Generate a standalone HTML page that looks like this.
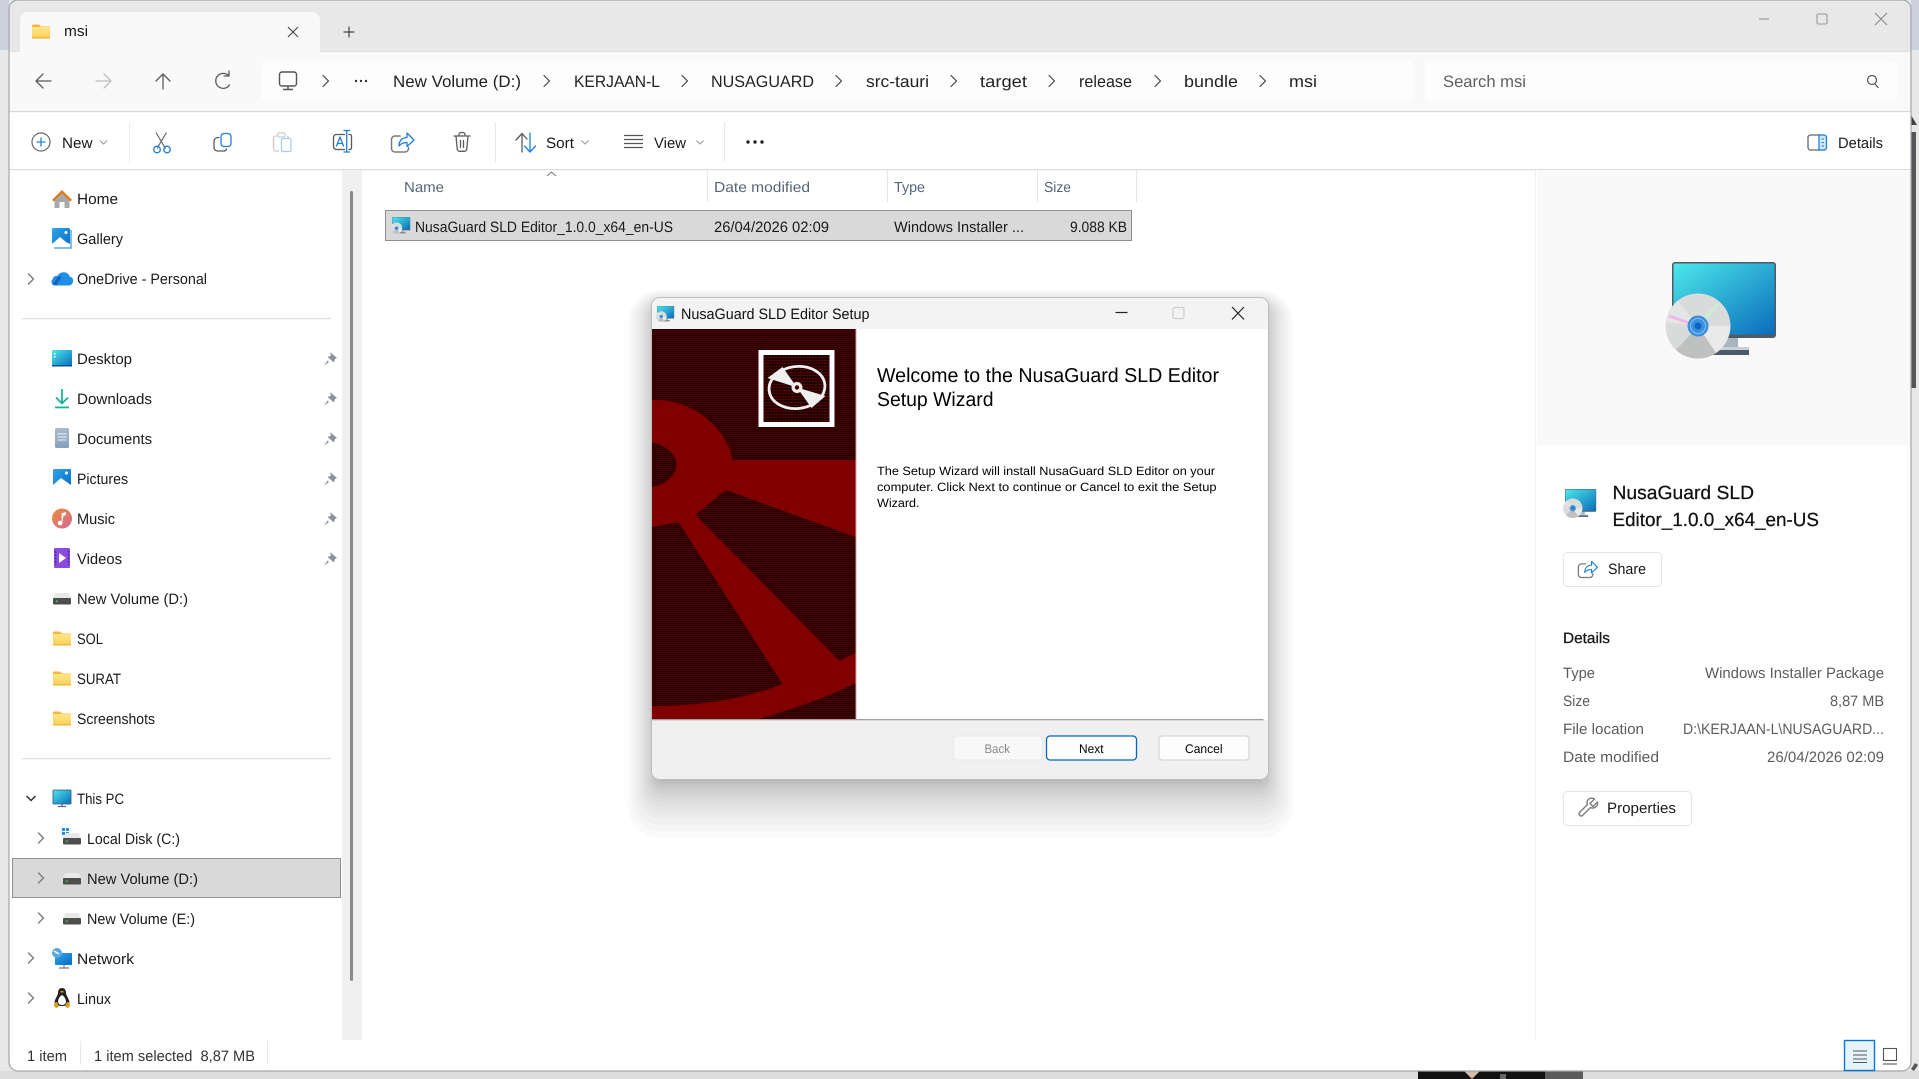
<!DOCTYPE html>
<html><head><meta charset="utf-8"><title>msi</title>
<style>
html,body{margin:0;padding:0;background:#e6e6e6;width:1919px;height:1079px;overflow:hidden}
svg{display:block;position:absolute;left:0;top:0}
text{font-family:"Liberation Sans",sans-serif;fill:#1a1a1a;font-size:15px;white-space:pre;text-rendering:geometricPrecision}
.n{font-size:16.5px;fill:#222}
.h{font-size:14.5px;fill:#56657a}
.g{fill:#5c5c5c}
.l{fill:none;stroke:#5a5a5a;stroke-width:1.3;stroke-linecap:round;stroke-linejoin:round}
.s{fill:none;stroke:#7a7a7a;stroke-width:1.5;stroke-linecap:round;stroke-linejoin:round}
.b{fill:none;stroke:#1f7fd6;stroke-width:1.3;stroke-linecap:round;stroke-linejoin:round}
</style></head>
<body>
<svg width="1919" height="1079" viewBox="0 0 1919 1079" xmlns="http://www.w3.org/2000/svg">
<defs>
<linearGradient id="scr" x1="0" y1="0" x2="1" y2="1"><stop offset="0" stop-color="#4ce8ea"/><stop offset="1" stop-color="#0a6cbc"/></linearGradient>
<linearGradient id="fld" x1="0" y1="0" x2="0" y2="1"><stop offset="0" stop-color="#ffe68a"/><stop offset="1" stop-color="#fcd25a"/></linearGradient>
<linearGradient id="mus" x1="0" y1="0" x2="1" y2="1"><stop offset="0" stop-color="#ef8a3c"/><stop offset="1" stop-color="#cf6a9a"/></linearGradient>
<linearGradient id="blu" x1="0" y1="0" x2="1" y2="1"><stop offset="0" stop-color="#2ea6ee"/><stop offset="1" stop-color="#0a6cc0"/></linearGradient>
<linearGradient id="doc" x1="0" y1="0" x2="0" y2="1"><stop offset="0" stop-color="#a8bcd0"/><stop offset="1" stop-color="#86a0ba"/></linearGradient>
<pattern id="dith" width="2" height="2" patternUnits="userSpaceOnUse"><rect width="2" height="2" fill="#0e0000"/><rect width="1" height="1" fill="#800000"/><rect x="1" y="1" width="1" height="1" fill="#3a0000"/></pattern>
<pattern id="dith2" width="3" height="3" patternUnits="userSpaceOnUse"><rect width="3" height="3" fill="#0a0000"/><rect width="1" height="3" fill="#500000"/><rect width="3" height="1" fill="#500000"/></pattern>
<clipPath id="win"><rect x="9" y="0" width="1902" height="1071" rx="9"/></clipPath>
<clipPath id="dlg"><rect x="652" y="297" width="617" height="483" rx="8"/></clipPath>
<clipPath id="art"><rect x="652" y="329" width="204" height="390"/></clipPath>

<g id="msi">
 <rect x="38" y="76" width="28" height="10" fill="#a8b4c0"/>
 <rect x="34" y="85" width="43" height="8" fill="#4e5a66"/><rect x="34" y="85" width="43" height="3" fill="#c8d0d8"/>
 <rect x="0" y="0" width="104" height="76" rx="3" fill="#4f5a66"/>
 <rect x="1.5" y="1.5" width="101" height="71" rx="2" fill="url(#scr)"/>
 <circle cx="26" cy="64" r="32.500" fill="#d9dbdb"/>
 <path d="M26 64L58 64A32 32 0 0 1 44 91Z" fill="#eaeaea"/>
 <path d="M26 64L44 91A32 32 0 0 1 4 88Z" fill="#bfc1c1"/>
 <path d="M26 64L-6 60A32 32 0 0 1 6 39Z" fill="#e4e6e6"/>
 <path d="M26 64L-3 54" stroke="#f0b8e8" stroke-width="3"/>
 <path d="M26 64L46 42" stroke="#c8f0d0" stroke-width="3"/>
 <circle cx="26" cy="64" r="10.500" fill="#3a90de"/><circle cx="26" cy="64" r="7.500" fill="none" stroke="#9cc8f0" stroke-width=".8"/><circle cx="26" cy="64" r="3.500" fill="#0a66c0"/>
</g>
<g id="share">
 <path class="s" d="M-4 -6h-5a3.500 3.500 0 0 0-3.500 3.500v9a3.500 3.500 0 0 0 3.500 3.500h10a3.500 3.500 0 0 0 3.500-3.500v-1"/>
 <path class="b" d="M-5 4c0-6 4-8.500 8-8.500v-4.500l7 7-7 6.500v-4c-3.500 0-6 1-8 3.500z"/>
</g>
<g id="pin"><path d="M-1 -7l7 6-2 1-1 3.500-6.500-5.500 3.500-1.500zM-3.500 1.500l-3.500 5 5-3.500z" fill="#8c949c"/></g>
<g id="fold"><path d="M0 2a1 1 0 0 1 1-1h6l2 2h8a1 1 0 0 1 1 1v10a1 1 0 0 1-1 1h-16a1 1 0 0 1-1-1z" fill="#f5b73a"/><rect x="0" y="3.500" width="18" height="11" rx="1" fill="url(#fld)"/><rect x="0" y="13.800" width="18" height="1.200" fill="#eeb030"/></g>
<g id="drv"><path d="M2.500 0h13l2.500 5h-18z" fill="#e8e8e8"/><rect x="0" y="5" width="18" height="6.500" rx="1" fill="#4e4e4e"/><rect x="3" y="7.500" width="1.500" height="1.500" fill="#40e060"/></g>
<path id="chev" class="s" d="M-2.500 -5L2.500 0L-2.500 5" style="stroke:#808080"/>
<path id="cn" d="M-3 -5.500L2.500 0L-3 5.500" fill="none" stroke="#444" stroke-width="1.200" stroke-linecap="round" stroke-linejoin="round"/>
<path id="dn" d="M-3.500 -1.500L0 2L3.500 -1.500" fill="none" stroke="#999" stroke-width="1.100"/>
</defs>

<!-- desktop behind -->
<rect width="1919" height="1079" fill="#e8e8e8"/>
<rect x="0" y="0" width="9" height="50" fill="#ccd3de"/><rect x="1911" y="0" width="8" height="50" fill="#ccd3de"/>
<rect x="0" y="1071" width="1919" height="8" fill="#dcdcdc"/>
<rect x="1418" y="1071" width="127" height="8" fill="#111"/><path d="M1464 1071h16l-8 8z" fill="#d8b8a8"/><rect x="1500" y="1074" width="6" height="5" fill="#666"/><rect x="1545" y="1071" width="38" height="8" fill="#5c5c5c"/>
<rect x="1911" y="132" width="5" height="256" fill="#555"/>
<path d="M1911 115l6 10h-6z" fill="#444"/>
<path d="M1911 1069l4-6 3 2-4 6z" fill="#555"/>

<!-- window -->
<g clip-path="url(#win)">
<rect x="9" y="0" width="1902" height="1071" fill="#fff"/>
<rect x="9" y="0" width="1902" height="51" fill="#e8e8e8"/>
<rect x="9" y="51" width="1902" height="60" fill="#f9f9f9"/>
<path d="M20 51V20a8 8 0 0 1 8-8h284a8 8 0 0 1 8 8v31z" fill="#f9f9f9"/>
<rect x="9" y="51" width="11" height="1" fill="#e0e0e0"/><rect x="320" y="51" width="1591" height="1" fill="#e0e0e0"/>
<rect x="9" y="111" width="1902" height="1.200" fill="#d6d6d6"/>
<rect x="9" y="169" width="1902" height="1.200" fill="#dcdcdc"/>
<rect x="342" y="170" width="20" height="870" fill="#f0f0f0"/>
<rect x="350" y="191" width="3" height="790" rx="1.500" fill="#8a8a8a"/>
<rect x="1537" y="170" width="374" height="275" fill="#f9f9f9"/>
<rect x="1535" y="170" width="1" height="870" fill="#f0f0f0"/>
</g>
<rect x="9" y="0" width="1902" height="1071" rx="9" fill="none" stroke="#a2a7ad" stroke-width="1.200"/>

<!-- tab -->
<use href="#fold" transform="translate(32 23.500)"/>
<text x="64" y="36" textLength="24" lengthAdjust="spacingAndGlyphs">msi</text>
<path d="M288 27l10 10M298 27l-10 10" stroke="#444" stroke-width="1.100" fill="none"/>
<path d="M343.500 32h11M349 26.500v11" stroke="#444" stroke-width="1.200" fill="none"/>
<path d="M1759 19h10" stroke="#999" stroke-width="1.200"/>
<rect x="1817" y="14" width="10" height="10" rx="1.500" fill="none" stroke="#999" stroke-width="1.100"/>
<path d="M1875 13l12 12M1887 13l-12 12" stroke="#888" stroke-width="1.100"/>

<!-- nav -->
<path class="l" d="M51 81H36M43 74L36 81L43 88"/>
<path class="l" style="stroke:#bdbdbd" d="M96 81H111M104 74L111 81L104 88"/>
<path class="l" d="M163 89V74M156 81L163 74L170 81"/>
<path class="l" d="M229.500 85a7.500 7.500 0 1 1-1-9.500M229 71v5h-5"/>
<rect x="261" y="61" width="1153" height="40" rx="5" fill="#fdfdfd"/>
<rect x="1425" y="61" width="473" height="40" rx="5" fill="#fdfdfd"/>
<rect x="279.500" y="72" width="17" height="14" rx="2.500" fill="none" stroke="#555" stroke-width="1.400"/><path d="M288 86v3M283 89.500h10" stroke="#555" stroke-width="1.400"/>
<use href="#cn" x="326" y="81"/>
<g fill="#333"><circle cx="356" cy="81" r="1.200"/><circle cx="361" cy="81" r="1.200"/><circle cx="366" cy="81" r="1.200"/></g>
<text class="n" x="393" y="87" textLength="128" lengthAdjust="spacingAndGlyphs">New Volume (D:)</text><use href="#cn" x="547" y="81"/>
<text class="n" x="574" y="87" textLength="86" lengthAdjust="spacingAndGlyphs">KERJAAN-L</text><use href="#cn" x="685" y="81"/>
<text class="n" x="711" y="87" textLength="103" lengthAdjust="spacingAndGlyphs">NUSAGUARD</text><use href="#cn" x="839" y="81"/>
<text class="n" x="866" y="87" textLength="63" lengthAdjust="spacingAndGlyphs">src-tauri</text><use href="#cn" x="954" y="81"/>
<text class="n" x="980" y="87" textLength="47" lengthAdjust="spacingAndGlyphs">target</text><use href="#cn" x="1052" y="81"/>
<text class="n" x="1079" y="87" textLength="53" lengthAdjust="spacingAndGlyphs">release</text><use href="#cn" x="1158" y="81"/>
<text class="n" x="1184" y="87" textLength="54" lengthAdjust="spacingAndGlyphs">bundle</text><use href="#cn" x="1263" y="81"/>
<text class="n" x="1289" y="87" textLength="28" lengthAdjust="spacingAndGlyphs">msi</text>
<text class="n" style="fill:#5f5f5f" x="1443" y="87" textLength="83" lengthAdjust="spacingAndGlyphs">Search msi</text>
<circle cx="1872" cy="80" r="4.500" fill="none" stroke="#555" stroke-width="1.200"/><path d="M1875 84l3.500 4" stroke="#555" stroke-width="1.200"/>

<!-- command bar -->
<circle cx="41" cy="142" r="9" fill="none" stroke="#666" stroke-width="1.200"/><path d="M41 137.500v9M36.500 142h9" stroke="#1f7fd6" stroke-width="1.300"/>
<text x="62" y="148" textLength="30.500" lengthAdjust="spacingAndGlyphs">New</text><use href="#dn" x="103.500" y="142"/>
<rect x="129" y="122" width="1" height="40" fill="#ececec"/>
<path d="M156 132.500l9.500 16M166.500 132.500l-9.500 16" stroke="#666" stroke-width="1.200" fill="none"/>
<circle cx="157" cy="149.500" r="3.300" class="b"/><circle cx="167" cy="149.500" r="3.300" class="b"/>
<rect x="221" y="133.500" width="10" height="13" rx="3" class="b"/><path class="l" d="M219 137.500h-1a4 4 0 0 0-4 4v6a3.500 3.500 0 0 0 3.500 3.500h6a3 3 0 0 0 3-2"/>
<path fill="none" stroke="#c8ccd0" stroke-width="1.300" d="M277 136h-1a2.500 2.500 0 0 0-2.500 2.500v10a2.500 2.500 0 0 0 2.500 2.500h3M279 133h5a1 1 0 0 1 1 1v2a1 1 0 0 1-1 1h-5a1 1 0 0 1-1-1v-2a1 1 0 0 1 1-1zM287 136a2.500 2.500 0 0 1 1.500 2"/>
<rect x="281.500" y="138.500" width="9.500" height="13" rx="1.500" fill="none" stroke="#a8cdee" stroke-width="1.300"/>
<path class="l" d="M344.500 134.500h-8a3 3 0 0 0-3 3v9a3 3 0 0 0 3 3h8M349 134.500h1a1.500 1.500 0 0 1 1.500 1.500v12a1.500 1.500 0 0 1-1.500 1.500h-1"/>
<path class="b" d="M344 130.500h5.500M346.700 130.500v21.500M344 152h5.500"/>
<path class="b" d="M336.500 146l3.500-9 3.500 9M337.500 143.500h5"/>
<use href="#share" transform="translate(404 142)"/>
<path class="l" d="M454 136h16M459 136v-1.500a2 2 0 0 1 2-2h2a2 2 0 0 1 2 2v1.500M456 136l1.200 13a2.500 2.500 0 0 0 2.500 2.300h4.600a2.500 2.500 0 0 0 2.500-2.300l1.200-13M460.500 140.500v7M463.500 140.500v7"/>
<rect x="495" y="122" width="1" height="40" fill="#e9e9e9"/>
<path class="l" d="M522 152V134M516 140l6-6.500 5 5.500"/><path class="b" d="M530 133v18.500M524.500 146l5.500 6 5.500-6"/>
<text x="546" y="148" textLength="28" lengthAdjust="spacingAndGlyphs">Sort</text><use href="#dn" x="585" y="142"/>
<path d="M624 135.500h19M624 139.500h19M624 143.500h19M624 147.500h19" stroke="#555" stroke-width="1.200"/>
<text x="654" y="148" textLength="32" lengthAdjust="spacingAndGlyphs">View</text><use href="#dn" x="700" y="142"/>
<rect x="724" y="122" width="1" height="40" fill="#e9e9e9"/>
<g fill="#222"><circle cx="748" cy="142" r="1.700"/><circle cx="755" cy="142" r="1.700"/><circle cx="762" cy="142" r="1.700"/></g>
<rect x="1808" y="135" width="18" height="15" rx="2.500" fill="none" stroke="#666" stroke-width="1.300"/><path d="M1819 135h5a2.500 2.500 0 0 1 2.500 2.500v10a2.500 2.500 0 0 1-2.500 2.500h-5z" fill="#d4e8f9" stroke="#1f7fd6" stroke-width="1.300"/><path d="M1821.500 139h2.500M1821.500 142.500h2.500M1821.500 146h2.500" stroke="#1f7fd6" stroke-width="1"/>
<text x="1838" y="148" textLength="45" lengthAdjust="spacingAndGlyphs">Details</text>

<!-- sidebar -->
<path d="M62 190l-10 10 2 1.500 8-8 8 8 2-1.500z" fill="#e07818"/><path d="M54.500 200.500L62 193.500l7.500 7V208h-5v-6h-5v6h-5z" fill="#a8a8a8"/>
<text x="77" y="204" textLength="41" lengthAdjust="spacingAndGlyphs">Home</text>
<rect x="52" y="228" width="18" height="18" rx="1.500" fill="url(#blu)"/><path d="M52 244l8-7 6 5 4 2v2H52z" fill="#fff"/><circle cx="66" cy="232.500" r="1.500" fill="#fff"/><path d="M71 230v18H54" fill="none" stroke="#5aa8e0" stroke-width="1.500"/>
<text x="77" y="244" textLength="46" lengthAdjust="spacingAndGlyphs">Gallery</text>
<use href="#chev" x="31" y="279"/>
<path d="M55 285.500a3.500 3.500 0 0 1-2.500-6c.5-3 3-4 5-3.500 1.500-3.500 6.500-5 10-2.500 1.500 1 2 2.500 2.500 3.500 2.500 0 3.500 2.500 3 4.500-.5 2.500-2 4-4 4z" fill="#1d8fe6"/><path d="M53 284l5.500-8 3 1-5 8.500z" fill="#1c5fc0"/>
<text x="77" y="284" textLength="130" lengthAdjust="spacingAndGlyphs">OneDrive - Personal</text>
<rect x="22" y="318" width="309" height="1.200" fill="#dedede"/>

<rect x="52" y="350" width="20" height="16" rx="1" fill="url(#scr)"/><rect x="52" y="365" width="20" height="1.500" fill="#0b4f8c"/><rect x="54" y="353" width="1.500" height="1.500" fill="#fff"/><rect x="54" y="356" width="1.500" height="1.500" fill="#fff"/>
<text x="77" y="364" textLength="55" lengthAdjust="spacingAndGlyphs">Desktop</text><use href="#pin" transform="translate(331 359)"/>
<path d="M62 389v14M56 397.500l6 6 6-6" fill="none" stroke="#19b394" stroke-width="1.800"/><rect x="55" y="406.500" width="14" height="1.800" fill="#19b394"/>
<text x="77" y="404" textLength="75" lengthAdjust="spacingAndGlyphs">Downloads</text><use href="#pin" transform="translate(331 399)"/>
<rect x="55" y="428" width="14" height="20" rx="1.500" fill="url(#doc)"/><path d="M57.500 434h9M57.500 437h9M57.500 440h9" stroke="#f0f4f8" stroke-width="1"/>
<text x="77" y="444" textLength="75" lengthAdjust="spacingAndGlyphs">Documents</text><use href="#pin" transform="translate(331 439)"/>
<rect x="53" y="469" width="18" height="18" rx="1" fill="url(#blu)"/><path d="M53 485l8-7 10 7v2H53z" fill="#fff"/><circle cx="66.500" cy="473" r="1.500" fill="#fff"/>
<text x="77" y="484" textLength="51" lengthAdjust="spacingAndGlyphs">Pictures</text><use href="#pin" transform="translate(331 479)"/>
<circle cx="62" cy="518.500" r="10" fill="url(#mus)"/><path d="M62 524v-10.500l3.500-1v2.500l-2 .5M62 522.500a2 2 0 1 1-2-1.500c1 0 2 .5 2 1.500" fill="#fff" stroke="#fff" stroke-width=".7"/>
<text x="77" y="524" textLength="38" lengthAdjust="spacingAndGlyphs">Music</text><use href="#pin" transform="translate(331 519)"/>
<rect x="54" y="548" width="16" height="20" rx="1" fill="#8a4ce0"/><path d="M59 553l7 5-7 5z" fill="#fff"/><path d="M55.500 551v14M68.500 551v14" stroke="#40208a" stroke-width="1.500" stroke-dasharray="1.500 1.800"/>
<text x="77" y="564" textLength="45" lengthAdjust="spacingAndGlyphs">Videos</text><use href="#pin" transform="translate(331 559)"/>
<use href="#drv" transform="translate(53 593)"/>
<text x="77" y="604" textLength="111" lengthAdjust="spacingAndGlyphs">New Volume (D:)</text>
<use href="#fold" transform="translate(53 630.500)"/><text x="77" y="644" textLength="26" lengthAdjust="spacingAndGlyphs">SOL</text>
<use href="#fold" transform="translate(53 670.500)"/><text x="77" y="684" textLength="44" lengthAdjust="spacingAndGlyphs">SURAT</text>
<use href="#fold" transform="translate(53 710.500)"/><text x="77" y="724" textLength="78" lengthAdjust="spacingAndGlyphs">Screenshots</text>
<rect x="22" y="758" width="309" height="1.200" fill="#dedede"/>
<path d="M26.500 796l4.500 4.500 4.500-4.500" fill="none" stroke="#333" stroke-width="1.500"/>
<rect x="53" y="790" width="18" height="14" rx=".5" fill="url(#scr)" stroke="#2f5a78" stroke-width=".8"/><path d="M62 804v2M58 806.500h8" stroke="#667" stroke-width="1.300"/>
<text x="77" y="804" textLength="47" lengthAdjust="spacingAndGlyphs">This PC</text>
<use href="#chev" x="41" y="838"/>
<g fill="#1a90e8"><rect x="62" y="828" width="3" height="3"/><rect x="66" y="828" width="3" height="3"/><rect x="62" y="832" width="3" height="3"/><rect x="66" y="832" width="3" height="3"/></g>
<use href="#drv" transform="translate(63 833)"/>
<text x="87" y="844" textLength="93" lengthAdjust="spacingAndGlyphs">Local Disk (C:)</text>
<rect x="12.500" y="858.500" width="328" height="39" fill="#d9d9d9" stroke="#8f8f8f"/>
<use href="#chev" x="41" y="878"/><use href="#drv" transform="translate(63 873)"/>
<text x="87" y="884" textLength="111" lengthAdjust="spacingAndGlyphs">New Volume (D:)</text>
<use href="#chev" x="41" y="918"/><use href="#drv" transform="translate(63 913)"/>
<text x="87" y="924" textLength="108" lengthAdjust="spacingAndGlyphs">New Volume (E:)</text>
<use href="#chev" x="31" y="958"/>
<rect x="55" y="953" width="17" height="12" fill="url(#blu)"/><path d="M64 965v2.500M59 968h10" stroke="#778" stroke-width="1.200"/><circle cx="57" cy="953" r="5" fill="#5aa8e0"/><path d="M54 951l5 3" stroke="#fff" stroke-width="1.500"/>
<text x="77" y="964" textLength="57" lengthAdjust="spacingAndGlyphs">Network</text>
<use href="#chev" x="31" y="998"/>
<path d="M62 988c-3 0-4 2.500-4 5 0 2-3 6-3.500 9 1 3 3 4 7.500 4s6.500-1 7.500-4c-.5-3-3.500-7-3.500-9 0-2.500-1-5-4-5z" fill="#222"/><path d="M62 995c-2 1-4 4-4 7 .5 2 2 3 4 3s3.500-1 4-3c0-3-2-6-4-7z" fill="#fff"/><path d="M54 1005c0-2 1.500-3 3-3l2 4-2 2c-1 0-3-1-3-3zM70 1005c0-2-1.500-3-3-3l-2 4 2 2c1 0 3-1 3-3z" fill="#d8a020"/><rect x="60.500" y="991" width="3" height="1.500" fill="#e0a020"/>
<text x="77" y="1004" textLength="34" lengthAdjust="spacingAndGlyphs">Linux</text>

<!-- file list headers -->
<text class="h" x="404" y="192" textLength="40" lengthAdjust="spacingAndGlyphs">Name</text>
<path d="M547 176l4.500-4 4.500 4" fill="none" stroke="#777" stroke-width="1"/>
<rect x="707" y="170" width="1" height="32" fill="#e6e6e6"/><rect x="887" y="170" width="1" height="32" fill="#e6e6e6"/><rect x="1037" y="170" width="1" height="32" fill="#e6e6e6"/><rect x="1136" y="170" width="1" height="32" fill="#e6e6e6"/>
<text class="h" x="714" y="192" textLength="96" lengthAdjust="spacingAndGlyphs">Date modified</text>
<text class="h" x="894" y="192" textLength="31" lengthAdjust="spacingAndGlyphs">Type</text>
<text class="h" x="1044" y="192" textLength="27" lengthAdjust="spacingAndGlyphs">Size</text>
<!-- file row -->
<rect x="385.500" y="210.500" width="746" height="30" fill="#d9d9d9" stroke="#8f8f8f"/>
<use href="#msi" transform="translate(392 217) scale(.175)"/>
<text x="415" y="232" textLength="258" lengthAdjust="spacingAndGlyphs">NusaGuard SLD Editor_1.0.0_x64_en-US</text>
<text x="714" y="232" textLength="115" lengthAdjust="spacingAndGlyphs">26/04/2026 02:09</text>
<text x="894" y="232" textLength="130" lengthAdjust="spacingAndGlyphs">Windows Installer ...</text>
<text x="1070" y="232" textLength="57" lengthAdjust="spacingAndGlyphs">9.088 KB</text>

<!-- details pane -->
<use href="#msi" transform="translate(1672 262)"/>
<use href="#msi" transform="translate(1565 489) scale(.3)"/>
<text x="1612.500" y="499" style="font-size:19px;fill:#111;stroke:#111;stroke-width:.25" textLength="141.500" lengthAdjust="spacingAndGlyphs">NusaGuard SLD</text>
<text x="1612.500" y="526" style="font-size:19px;fill:#111;stroke:#111;stroke-width:.25" textLength="206.500" lengthAdjust="spacingAndGlyphs">Editor_1.0.0_x64_en-US</text>
<rect x="1563.500" y="552.500" width="98" height="34" rx="4" fill="#fff" stroke="#e4e4e4"/>
<use href="#share" transform="translate(1589 569) scale(.85)"/>
<text x="1608" y="574" textLength="38" lengthAdjust="spacingAndGlyphs">Share</text>
<text x="1563" y="643" style="fill:#1a1a1a;stroke:#1a1a1a;stroke-width:.3" textLength="47" lengthAdjust="spacingAndGlyphs">Details</text>
<text class="g" x="1563" y="678" textLength="32" lengthAdjust="spacingAndGlyphs">Type</text>
<text class="g" x="1705" y="678" textLength="179" lengthAdjust="spacingAndGlyphs">Windows Installer Package</text>
<text class="g" x="1563" y="706" textLength="27" lengthAdjust="spacingAndGlyphs">Size</text>
<text class="g" x="1830" y="706" textLength="54" lengthAdjust="spacingAndGlyphs">8,87 MB</text>
<text class="g" x="1563" y="734" textLength="81" lengthAdjust="spacingAndGlyphs">File location</text>
<text class="g" x="1683" y="734" textLength="201" lengthAdjust="spacingAndGlyphs">D:\KERJAAN-L\NUSAGUARD...</text>
<text class="g" x="1563" y="762" textLength="96" lengthAdjust="spacingAndGlyphs">Date modified</text>
<text class="g" x="1767" y="762" textLength="117" lengthAdjust="spacingAndGlyphs">26/04/2026 02:09</text>
<rect x="1563.500" y="791.500" width="128" height="34" rx="4" fill="#fff" stroke="#e4e4e4"/>
<path transform="translate(-2.500 0)" d="M1597 799l-4.500 4.500 3 3 4.500-4.500c1 3-2.500 7.500-7 5.500l-8 8c-1.500 1.500-4.500-1-3-3l8-8c-2-4.500 3-8 7-5.500z" fill="none" stroke="#7c7c7c" stroke-width="1.400" stroke-linejoin="round"/>
<text x="1607" y="813" textLength="69" lengthAdjust="spacingAndGlyphs">Properties</text>

<!-- status -->
<text x="27" y="1061" style="font-size:15px;fill:#333" textLength="40" lengthAdjust="spacingAndGlyphs">1 item</text>
<rect x="80" y="1041" width="1" height="24" fill="#e8e8e8"/>
<text x="94" y="1061" style="font-size:15px;fill:#333" textLength="161" lengthAdjust="spacingAndGlyphs">1 item selected  8,87 MB</text>
<rect x="267" y="1041" width="1" height="24" fill="#e8e8e8"/>
<rect x="1844.500" y="1040.500" width="30" height="30" fill="#e6f3fb" stroke="#0078d4" stroke-width="1.400"/>
<path d="M1853 1051h14M1853 1055h14M1853 1059h14M1853 1062.500h14" stroke="#555" stroke-width="1.100"/>
<rect x="1883.500" y="1048.500" width="13" height="12" fill="#fff" stroke="#555" stroke-width="1.100"/><path d="M1883 1064h14" stroke="#555" stroke-width="1.100"/>

<!-- dialog shadow: stacked translucent layers, eased falloff -->
<g fill="#000" fill-opacity=".018">
<rect x="655.900" y="305.900" width="609.200" height="474.300" rx="8"/>
<rect x="655.600" y="305.800" width="609.900" height="475.200" rx="8"/>
<rect x="655" y="305.400" width="611" height="476.600" rx="9"/>
<rect x="654.300" y="305" width="612.500" height="478.600" rx="10"/>
<rect x="653.300" y="304.400" width="614.500" height="481.200" rx="10"/>
<rect x="652.100" y="303.800" width="616.900" height="484.400" rx="11"/>
<rect x="650.600" y="302.900" width="619.700" height="488.200" rx="13"/>
<rect x="649" y="302" width="623" height="492.500" rx="14"/>
<rect x="647.100" y="300.900" width="626.700" height="497.400" rx="16"/>
<rect x="645.100" y="299.800" width="630.900" height="502.900" rx="17"/>
<rect x="642.800" y="298.400" width="635.500" height="509" rx="19"/>
<rect x="640.300" y="297" width="640.500" height="515.600" rx="21"/>
<rect x="637.500" y="295.400" width="646" height="522.900" rx="24"/>
<rect x="634.600" y="293.800" width="651.900" height="530.700" rx="26"/>
<rect x="631.400" y="291.900" width="658.200" height="539" rx="29"/>
<rect x="628" y="290" width="665" height="548" rx="32"/>
</g>
<!-- dialog -->
<g transform="translate(-.5 0)">
<g clip-path="url(#dlg)">
<rect x="652" y="297" width="617" height="483" fill="#fff"/>
<rect x="652" y="297" width="617" height="32" fill="#f3f3f3"/>
<rect x="652" y="720" width="617" height="60" fill="#f0f0f0"/>
<g clip-path="url(#art)">
 <rect x="652" y="329" width="204" height="390" fill="#800000"/>
 <path d="M652 329H856V460H733C728 428 692 398 652 400Z" fill="url(#dith)"/>
 <path d="M652 442C668 446 678 456 677 465C677 476 664 486 652 487Z" fill="url(#dith)"/>
 <path d="M726 490L856 537V653L840 661L696 515Z" fill="url(#dith)"/>
 <path d="M652 527L679 522L783 684C745 699 700 706 652 706Z" fill="url(#dith)"/>
 <path d="M760 719C795 708 830 697 856 683V719Z" fill="url(#dith)"/>
 <rect x="761.500" y="352.500" width="71" height="72" fill="url(#dith2)" stroke="#fff" stroke-width="5"/>
 <ellipse cx="797.500" cy="387.500" rx="28" ry="21" fill="none" stroke="#f0f0f0" stroke-width="2.800" transform="rotate(-7 797.500 387.500)"/>
 <path d="M797.500 387.500L768 378L783 367Z M797.500 387.500L812 408L826 396Z" fill="#f0f0f0"/>
 <circle cx="797.500" cy="387.500" r="5.500" fill="#eee"/><circle cx="797.500" cy="387.500" r="2.200" fill="#400000"/>
</g>
<rect x="856" y="329" width="1" height="390" fill="#c04040" opacity=".5"/>
<rect x="652" y="719" width="612" height="1.300" fill="#a0a0a0"/>
</g>
<rect x="652" y="297.500" width="617" height="482" rx="8" fill="none" stroke="#bdbdbd" stroke-width="1"/>
<use href="#msi" transform="translate(657.500 306) scale(.165)"/>
<text x="681.500" y="319" style="font-size:15px;fill:#111" textLength="188.500" lengthAdjust="spacingAndGlyphs">NusaGuard SLD Editor Setup</text>
<path d="M1116 312.500h12" stroke="#222" stroke-width="1.200"/>
<rect x="1173.500" y="307.500" width="11" height="11" rx="1.500" fill="none" stroke="#cfcfcf" stroke-width="1.200"/>
<path d="M1232.500 307l12 12.500M1244.500 307l-12 12.500" stroke="#222" stroke-width="1.200"/>
<text x="877.500" y="382" style="font-size:20px;fill:#000" textLength="342" lengthAdjust="spacingAndGlyphs">Welcome to the NusaGuard SLD Editor</text>
<text x="877.500" y="406" style="font-size:20px;fill:#000" textLength="116.500" lengthAdjust="spacingAndGlyphs">Setup Wizard</text>
<text x="877.500" y="475" style="font-size:12px;fill:#000" textLength="338" lengthAdjust="spacingAndGlyphs">The Setup Wizard will install NusaGuard SLD Editor on your</text>
<text x="877.500" y="491" style="font-size:12px;fill:#000" textLength="339.500" lengthAdjust="spacingAndGlyphs">computer. Click Next to continue or Cancel to exit the Setup</text>
<text x="877.500" y="507" style="font-size:12px;fill:#000" textLength="42.500" lengthAdjust="spacingAndGlyphs">Wizard.</text>
<rect x="954" y="736" width="89" height="24" rx="3.500" fill="#f8f8f8" stroke="#e8e8e8"/>
<text x="985" y="753" style="font-size:12.500px;fill:#8a8a8a" textLength="25.500" lengthAdjust="spacingAndGlyphs">Back</text>
<rect x="1047" y="736" width="90" height="24" rx="3.500" fill="#fdfdfd" stroke="#0067c0" stroke-width="1.300"/>
<text x="1079.500" y="753" style="font-size:12.500px;fill:#000" textLength="24.500" lengthAdjust="spacingAndGlyphs">Next</text>
<rect x="1159.500" y="736" width="90" height="24" rx="3.500" fill="#fdfdfd" stroke="#cfcfcf"/>
<text x="1185.500" y="753" style="font-size:12.500px;fill:#000" textLength="37.500" lengthAdjust="spacingAndGlyphs">Cancel</text>
</g>
</svg>
</body></html>
